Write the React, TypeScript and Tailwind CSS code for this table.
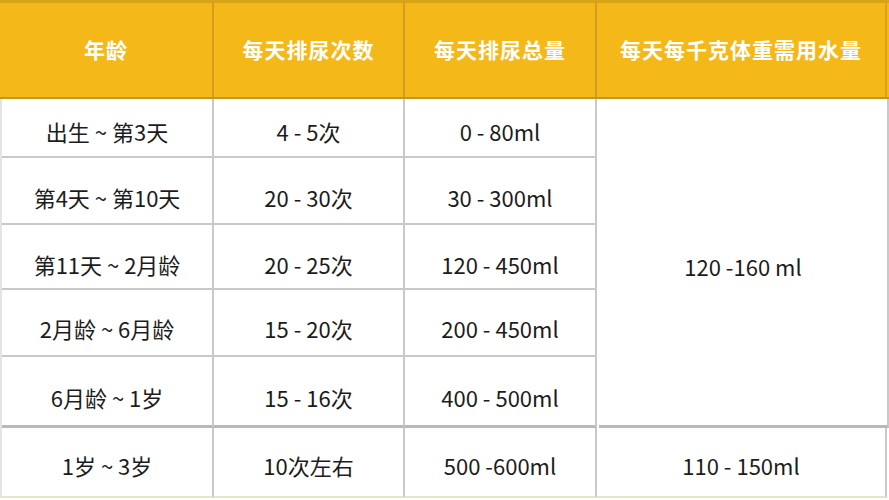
import React from 'react';

const rows = [
  { age: '出生 ~ 第3天', times: '4 - 5次', total: '0 - 80ml', h: 'h-[59px]', pt: 'pt-[8px]' },
  { age: '第4天 ~ 第10天', times: '20 - 30次', total: '30 - 300ml', h: 'h-[67px]', pt: 'pt-[14px]' },
  { age: '第11天 ~ 2月龄', times: '20 - 25次', total: '120 - 450ml', h: 'h-[65px]', pt: 'pt-[16px]' },
  { age: '2月龄 ~ 6月龄', times: '15 - 20次', total: '200 - 450ml', h: 'h-[67px]', pt: 'pt-[12px]' },
  { age: '6月龄 ~ 1岁', times: '15 - 16次', total: '400 - 500ml', h: 'h-[71px]', pt: 'pt-[12px]' },
];

const headers = ['年龄', '每天排尿次数', '每天排尿总量', '每天每千克体重需用水量'];

const cell = 'flex items-center justify-center border-r-2 border-b-2 border-[#c9c9c9] text-[22px]';

export default function App() {
  return (
    <div
      className="w-[889px] h-[500px] bg-white overflow-hidden text-[#1c1c1c]"
      style={{ fontFamily: '"Noto Sans CJK SC", "Noto Sans", sans-serif' }}
    >
      {/* Header */}
      <div className="grid grid-cols-[214px_191px_192px_290px] h-[99px] bg-[#f5b819] border-t-[3px] border-[#d9a318] border-b-2 border-b-[#c39522]">
        {headers.map((h, i) => (
          <div
            key={h}
            className={`flex items-center justify-center text-white font-bold text-[21px] tracking-[1px] ${i < 3 ? 'border-r-2 border-[#cf9e22]' : 'border-r-2 border-[#d9a318]'}`}
          >
            {h}
          </div>
        ))}
      </div>

      {/* Body */}
      <div className="grid grid-cols-[214px_191px_192px_290px] border-l-2 border-[#e4e4e4]">
        <div className="col-span-3 flex flex-col">
          {rows.map((r, i) => (
            <div key={r.age} className={`grid grid-cols-[212px_191px_192px] ${r.h}`}>
              <div className={`${cell} ${r.pt} ${i === 4 ? 'border-b-[3px] border-b-[#b9b9b9]' : ''}`}>{r.age}</div>
              <div className={`${cell} ${r.pt} ${i === 4 ? 'border-b-[3px] border-b-[#b9b9b9]' : ''}`}>{r.times}</div>
              <div className={`${cell} ${r.pt} ${i === 4 ? 'border-b-[3px] border-b-[#b9b9b9]' : ''}`}>{r.total}</div>
            </div>
          ))}
        </div>
        <div className="flex items-center justify-center pt-[8px] border-b-[3px] border-[#b9b9b9] border-r-2 border-r-[#c9c9c9] text-[22px]">
          120 -160 ml
        </div>

        <div className="col-span-4 grid grid-cols-[212px_191px_192px_290px] h-[70px]">
          <div className={`${cell} pt-[6px] border-b-[#e8e4c8]`}>1岁 ~ 3岁</div>
          <div className={`${cell} pt-[6px] border-b-[#e8e4c8]`}>10次左右</div>
          <div className={`${cell} pt-[6px] border-b-[#e8e4c8]`}>500 -600ml</div>
          <div className={`${cell} pt-[6px] border-b-[#e8e4c8]`}>110 - 150ml</div>
        </div>
      </div>
    </div>
  );
}
